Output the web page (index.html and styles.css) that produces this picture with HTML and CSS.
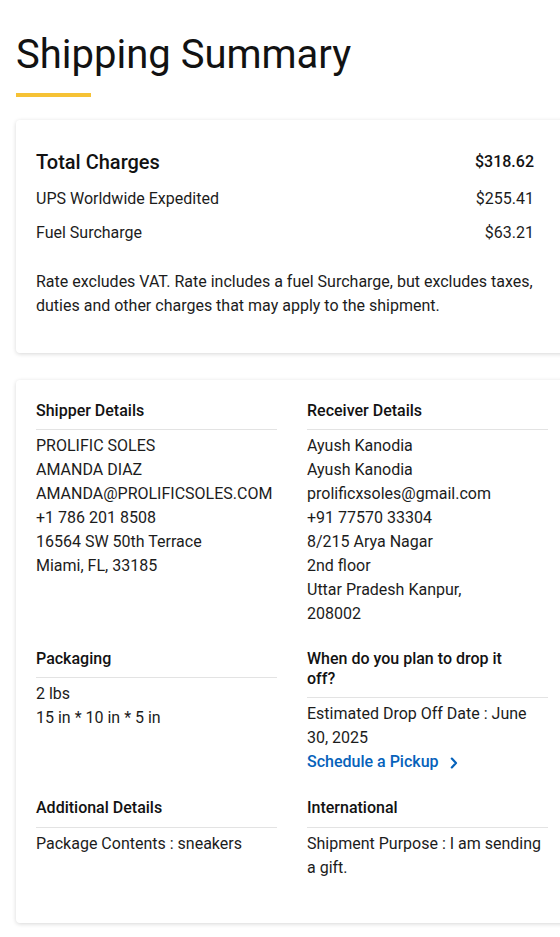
FILE: index.html
```html
<!DOCTYPE html>
<html lang="en">
<head>
<meta charset="utf-8">
<title>Shipping Summary</title>
<link rel="stylesheet" href="styles.css">
</head>
<body>
<div class="page">
  <h1 class="title">Shipping Summary</h1>
  <div class="title-bar"></div>

  <section class="card charges">
    <div class="row total"><span>Total Charges</span><span class="amount">$318.62</span></div>
    <div class="row item first"><span>UPS Worldwide Expedited</span><span>$255.41</span></div>
    <div class="row item"><span>Fuel Surcharge</span><span>$63.21</span></div>
    <p class="note">Rate excludes VAT. Rate includes a fuel Surcharge, but excludes taxes, duties and other charges that may apply to the shipment.</p>
  </section>

  <section class="card details">
    <div class="block">
      <h2 class="block-title">Shipper Details</h2>
      <div class="block-body">
        <div>PROLIFIC SOLES</div>
        <div>AMANDA DIAZ</div>
        <div>AMANDA@PROLIFICSOLES.COM</div>
        <div>+1 786 201 8508</div>
        <div>16564 SW 50th Terrace</div>
        <div>Miami, FL, 33185</div>
      </div>
    </div>
    <div class="block">
      <h2 class="block-title">Receiver Details</h2>
      <div class="block-body">
        <div>Ayush Kanodia</div>
        <div>Ayush Kanodia</div>
        <div>prolificxsoles@gmail.com</div>
        <div>+91 77570 33304</div>
        <div>8/215 Arya Nagar</div>
        <div>2nd floor</div>
        <div>Uttar Pradesh Kanpur,</div>
        <div>208002</div>
      </div>
    </div>
    <div class="block">
      <h2 class="block-title">Packaging</h2>
      <div class="block-body">
        <div>2 lbs</div>
        <div>15 in * 10 in * 5 in</div>
      </div>
    </div>
    <div class="block">
      <h2 class="block-title">When do you plan to drop it off?</h2>
      <div class="block-body">
        <div>Estimated Drop Off Date : June 30, 2025</div>
        <a class="link" href="#">Schedule a Pickup<svg class="chev" width="8" height="12" viewBox="0 0 8 12" aria-hidden="true"><path d="M1.8 1.6 L6 6 L1.8 10.4" fill="none" stroke="#0662bb" stroke-width="2.2" stroke-linecap="round" stroke-linejoin="round"/></svg></a>
      </div>
    </div>
    <div class="block last">
      <h2 class="block-title">Additional Details</h2>
      <div class="block-body">
        <div>Package Contents : sneakers</div>
      </div>
    </div>
    <div class="block last">
      <h2 class="block-title">International</h2>
      <div class="block-body">
        <div>Shipment Purpose : I am sending a gift.</div>
      </div>
    </div>
  </section>
</div>
</body>
</html>
```

FILE: styles.css
```css
html, body {
  margin: 0;
  padding: 0;
  background: #ffffff;
  overflow-x: hidden;
}
body {
  font-family: Roboto, "Liberation Sans", Arial, sans-serif;
  color: #1c1c1c;
  -webkit-font-smoothing: antialiased;
}
.page {
  width: 552px;
  padding: 31px 0 40px 16px;
}
.title {
  margin: 0;
  font-size: 40px;
  line-height: 48px;
  font-weight: 400;
  color: #121212;
}
.title-bar {
  width: 75px;
  height: 4px;
  background: #f6c235;
  margin: 14px 0 23px;
}
.card {
  background: #fff;
  border-radius: 4px;
  box-shadow: 0 1px 4px rgba(0, 0, 0, 0.16);
}
.charges {
  padding: 28px 34px 35px 20px;
}
.row {
  display: flex;
  justify-content: space-between;
  align-items: center;
  font-size: 16px;
  line-height: 24px;
}
.row.total {
  font-size: 20px;
  line-height: 28px;
  font-weight: 500;
  color: #121212;
  margin-bottom: 11px;
}
.row.total .amount {
  font-size: 16px;
}
.row.item.first {
  margin-bottom: 10px;
}
.note {
  margin: 25px 0 0;
  font-size: 16px;
  line-height: 24px;
}
.details {
  margin-top: 27px;
  padding: 21px 20px 43px 20px;
  display: grid;
  grid-template-columns: 241px 241px;
  column-gap: 30px;
  row-gap: 23px;
}
.block.last {
  margin-top: 1px;
}
.block.last .block-title {
  padding-bottom: 9px;
}
.block-title {
  margin: 0;
  font-size: 16px;
  line-height: 20px;
  font-weight: 500;
  color: #121212;
  padding: 0 20px 8px 0;
  border-bottom: 1px solid #e3e3e3;
}
.block-body {
  margin-top: 4px;
  font-size: 16px;
  line-height: 24px;
}
.link {
  display: inline-flex;
  align-items: center;
  color: #0662bb;
  font-weight: 500;
  text-decoration: none;
}
.chev {
  margin-left: 11px;
  margin-top: 1px;
}
```
